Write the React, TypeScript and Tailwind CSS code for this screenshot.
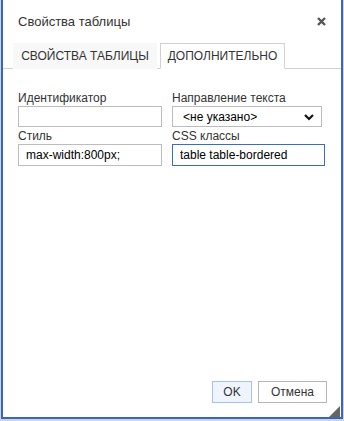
import React, { useState } from 'react';

const App: React.FC = () => {
  const [tab, setTab] = useState(1);
  const [id, setId] = useState('');
  const [dir, setDir] = useState('');
  const [style, setStyle] = useState('max-width:800px;');
  const [cls, setCls] = useState('table table-bordered');

  return (
    <div className="w-[344px] h-[421px] bg-[#c9d4e6] pl-[1px] pr-[1px] pb-[2px] font-['Liberation_Sans',Arial,sans-serif] text-[#333]">
      <div className="relative h-full flex flex-col bg-white border-l-2 border-r-2 border-b-2 border-[#3a66b4]">
        {/* header */}
        <div className="h-[43px] flex items-center justify-between pl-[15px] pr-[15px]">
          <span className="text-[13px] text-[#333]">Свойства таблицы</span>
          <svg width="9" height="9" viewBox="0 0 9 9" className="cursor-pointer">
            <path d="M1 1 L8 8 M8 1 L1 8" stroke="#555" strokeWidth="2.4" strokeLinecap="butt" />
          </svg>
        </div>

        {/* tabs */}
        <div className="flex gap-[3px] pl-[10px] border-b border-[#d1d1d1] h-[26px]">
          <button
            onClick={() => setTab(0)}
            className={
              'w-[144px] h-[26px] text-[12px] uppercase text-[#333] ' +
              (tab === 0 ? 'bg-white border border-[#d1d1d1] border-b-white' : 'bg-[#f8f8f8]')
            }
          >
            Свойства таблицы
          </button>
          <button
            onClick={() => setTab(1)}
            className={
              'w-[125px] h-[26px] text-[12px] uppercase text-[#333] ' +
              (tab === 1 ? 'bg-white border border-[#d1d1d1] border-b-white' : 'bg-[#f8f8f8]')
            }
          >
            Дополнительно
          </button>
        </div>

        {/* form */}
        <div className="pt-[21px] pl-[15px] grid grid-cols-[144px_153px] gap-x-[10px] text-[12px]">
          <div>
            <div className="leading-[16px] text-[#333]">Идентификатор</div>
            <input
              value={id}
              onChange={e => setId(e.target.value)}
              className="w-[144px] h-[21px] border border-[#bcbcbc] px-[7px] text-[12px] text-black outline-none"
            />
          </div>
          <div>
            <div className="leading-[16px] text-[#333]">Направление текста</div>
            <div className="relative w-[150px] h-[21px] border border-[#bcbcbc] flex items-center">
              <select
                value={dir}
                onChange={e => setDir(e.target.value)}
                className="appearance-none w-full h-full pl-[10px] text-[12px] text-black bg-transparent outline-none"
              >
                <option value="">&lt;не указано&gt;</option>
                <option value="ltr">Слева направо (LTR)</option>
                <option value="rtl">Справа налево (RTL)</option>
              </select>
              <svg width="10" height="7" viewBox="0 0 10 7" className="absolute right-[7px] top-[7px] pointer-events-none">
                <path d="M1 1 L5 5 L9 1" stroke="#111" strokeWidth="2.2" fill="none" />
              </svg>
            </div>
          </div>
          <div>
            <div className="leading-[16px] pt-[1px] text-[#333]">Стиль</div>
            <input
              value={style}
              onChange={e => setStyle(e.target.value)}
              className="w-[144px] h-[22px] border border-[#bcbcbc] px-[7px] text-[12px] text-black outline-none"
            />
          </div>
          <div>
            <div className="leading-[16px] pt-[1px] text-[#333]">CSS классы</div>
            <input
              value={cls}
              onChange={e => setCls(e.target.value)}
              className="w-[153px] h-[22px] border border-[#3a6cc0] px-[7px] text-[12px] text-black outline-none"
            />
          </div>
        </div>

        <div className="flex-1" />

        {/* footer */}
        <div className="flex justify-end gap-[6px] pr-[14px] pb-[14px]">
          <button className="w-[40px] h-[22px] bg-[#eef5ff] border border-[#a3c1f5] text-[12px] text-[#333]">OK</button>
          <button className="w-[69px] h-[22px] bg-white border border-[#b6b6b6] text-[12px] text-[#333]">Отмена</button>
        </div>

        {/* resize grip */}
        <svg width="11" height="11" viewBox="0 0 11 11" className="absolute right-[1px] bottom-0">
          <path d="M11 0 L11 11 L0 11 Z" fill="#666" />
        </svg>
      </div>
    </div>
  );
};

export default App;
